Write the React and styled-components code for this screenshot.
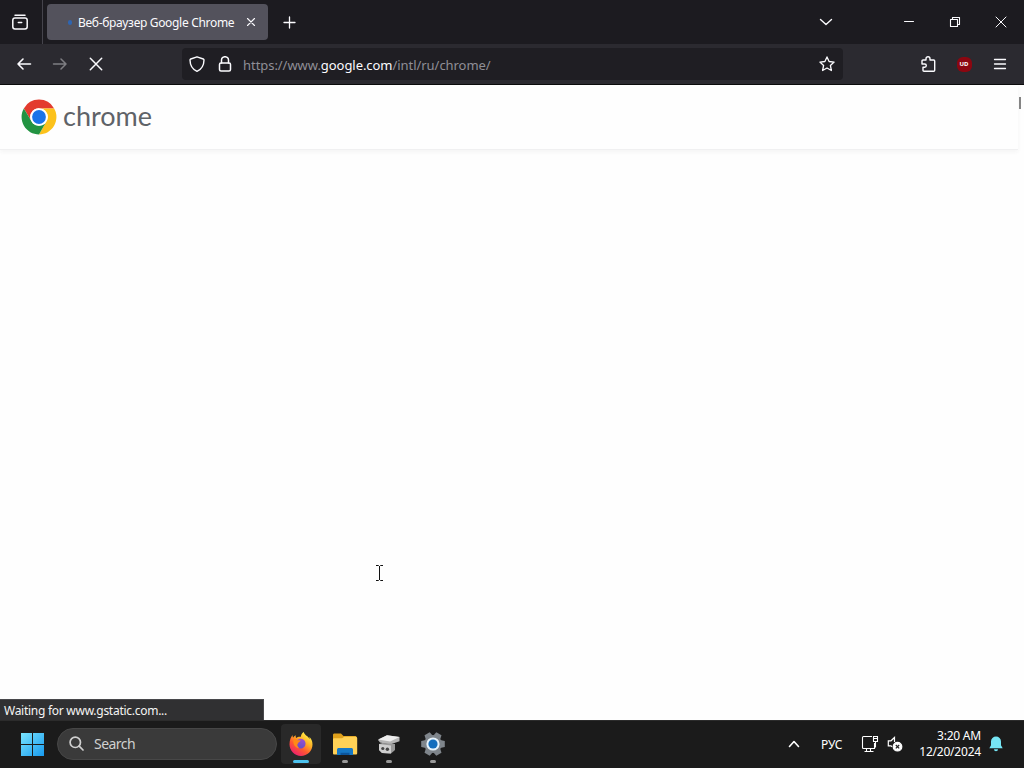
import React from 'react';
import styled, { createGlobalStyle } from 'styled-components';

const GlobalStyle = createGlobalStyle`
  * {
    box-sizing: border-box;
  }

  body {
    margin: 0;
    overflow: hidden;
    font-family: 'Noto Sans', 'Open Sans', sans-serif;
  }

  svg {
    display: block;
    flex: none;
  }
`;

const Desktop = styled.div`
  position: relative;
  display: flex;
  flex-direction: column;
  width: 1024px;
  height: 768px;
  background: #fefefe;
`;

const TabStrip = styled.div`
  display: flex;
  align-items: center;
  height: 44px;
  background: #1c1b20;
  color: #fbfbfe;
`;

const IconCell = styled.div`
  display: flex;
  flex: none;
  align-items: center;
  justify-content: center;
  width: ${(props) => props.$width}px;
  height: 100%;
  opacity: ${(props) => (props.$dim ? 0.4 : 1)};
`;

const RecentCell = styled(IconCell)`
  margin-right: 4px;
  padding-right: 2px;
  border-right: 1px solid #45444c;
`;

const Tab = styled.div`
  display: flex;
  align-items: center;
  width: 221px;
  height: 36px;
  padding: 0 12px 0 21px;
  border-radius: 4px;
  background: #53525c;
`;

const LoadingDot = styled.div`
  width: 4px;
  height: 5px;
  margin-right: 6px;
  border-radius: 2px;
  background: #2f65b0;
`;

const TabTitle = styled.div`
  flex: 1;
  padding-top: 1px;
  font-size: 12px;
  letter-spacing: ${(props) => props.$spacing}px;
  white-space: nowrap;
`;

const Spacer = styled.div`
  flex: 1;
`;

const Toolbar = styled.div`
  display: flex;
  align-items: center;
  height: 41px;
  padding: 0 6px;
  border-bottom: 1px solid #0c0c0d;
  background: #2b2a30;
  color: #fbfbfe;
`;

const UrlBar = styled.div`
  display: flex;
  align-items: center;
  width: 661px;
  height: 32px;
  margin-left: 68px;
  padding: 0 2px 0 1px;
  border-radius: 4px;
  background: #1f1e23;
`;

const Url = styled.div`
  margin-left: 4px;
  padding-top: 2px;
  color: #8f8e96;
  font-size: 13px;
  letter-spacing: ${(props) => props.$spacing}px;
  white-space: nowrap;
`;

const Domain = styled.span`
  color: #fbfbfe;
`;

const Blocker = styled.div`
  width: 15px;
  height: 15px;
  border-radius: 6px;
  background: #8c0610;
  color: #fff;
  font-size: 6px;
  font-weight: 700;
  line-height: 14px;
  text-align: center;
`;

const Page = styled.main`
  position: relative;
  flex: 1;
`;

const PageHeader = styled.header`
  display: flex;
  align-items: center;
  width: 1018px;
  height: 65px;
  padding-left: 21px;
  border-bottom: 1px solid #f0f0f1;
  box-shadow: 0 2px 4px rgba(60, 64, 67, 0.05);
`;

const Wordmark = styled.div`
  margin: -2px 0 0 6px;
  color: #5f6368;
  font-family: Lato, sans-serif;
  font-size: 27px;
  line-height: 34px;
`;

const ScrollMark = styled.div`
  position: absolute;
  top: 12px;
  right: 3px;
  width: 2px;
  height: 12px;
  background: #858585;
`;

const StatusText = styled.div`
  position: absolute;
  bottom: 0;
  left: 0;
  width: 264px;
  height: 21px;
  padding-left: 4px;
  border: 1px solid #48484b;
  border-width: 1px 1px 0 0;
  background: #303032;
  color: #f4f4f4;
  font-size: 12px;
  line-height: 22px;
  letter-spacing: ${(props) => props.$spacing}px;
`;

const TextCursor = styled.svg`
  position: absolute;
  top: 565px;
  left: 375px;
`;

const Taskbar = styled.footer`
  display: flex;
  align-items: center;
  height: 48px;
  padding: 0 0 1px 21px;
  border-top: 1px solid #2c2c2c;
  background: #1b1b1b;
  color: #fff;
`;

const SearchBox = styled.div`
  display: flex;
  align-items: center;
  width: 220px;
  height: 32px;
  margin: 0 4px 0 12px;
  padding: 0 0 1px 11px;
  border: 1px solid #474747;
  border-radius: 16px;
  background: #3a3a3a;
  color: #d0d0d0;
  font-size: 14px;
  line-height: 18px;
`;

const SearchLabel = styled.span`
  margin-left: 10px;
  letter-spacing: ${(props) => props.$spacing}px;
`;

const AppButton = styled.div`
  display: flex;
  flex-direction: column;
  align-items: center;
  justify-content: space-between;
  width: 40px;
  height: 40px;
  margin-right: 4px;
  padding: 8px 0 1px;
  border-radius: 4px;
  background: ${(props) => (props.$active ? '#292929' : 'transparent')};
`;

const Running = styled.div`
  width: ${(props) => (props.$active ? 16 : 6)}px;
  height: 3px;
  border-radius: 2px;
  background: ${(props) => (props.$active ? '#4cc2ee' : '#999')};
`;

const Language = styled.div`
  width: 24px;
  margin: 0 16px 0 21px;
  font-size: 12px;
  letter-spacing: ${(props) => props.$spacing}px;
`;

const Speaker = styled.div`
  margin-left: 8px;
`;

const Clock = styled.div`
  width: 66px;
  margin: 0 8px 0 12px;
  font-size: 12px;
  line-height: 16px;
  letter-spacing: ${(props) => props.$spacing}px;
  text-align: right;
  white-space: nowrap;
`;

const Bell = styled.div`
  width: 35px;
`;

const Line = ({ size = 16, width = 1.3, children }) => (
  <svg
    width={size}
    height={size}
    viewBox={`0 0 ${size} ${size}`}
    fill="none"
    stroke="currentColor"
    strokeWidth={width}
    strokeLinecap="round"
    strokeLinejoin="round"
  >
    {children}
  </svg>
);

const ChromeLogo = () => (
  <svg width="36" height="36" viewBox="-24 -24 48 48">
    <path d="M-20.2-11.5A23.3 23.3 0 0 1 20.2-11.5H0A11.5 11.5 0 0 0-10 5.8z" fill="#e33b2e" />
    <path d="M20.2-11.5A23.3 23.3 0 0 1 0 23.3L10 5.8A11.5 11.5 0 0 0 0-11.5z" fill="#fcc21b" />
    <path d="M0 23.3A23.3 23.3 0 0 1-20.2-11.5L-10 5.8A11.5 11.5 0 0 0 10 5.8z" fill="#229342" />
    <circle r="11.8" fill="#fff" />
    <circle r="9.2" fill="#1a73e8" />
  </svg>
);

const WindowsLogo = () => (
  <svg width="24" height="24" viewBox="0 0 24 24">
    <defs>
      <linearGradient id="win" x1="0" y1="0" x2="24" y2="24" gradientUnits="userSpaceOnUse">
        <stop offset="0" stopColor="#7be6ff" />
        <stop offset="1" stopColor="#1598ee" />
      </linearGradient>
    </defs>
    <path d="M0 1h11v11H0zM12 1h11v11H12zM0 13h11v11H0zM12 13h11v11H12z" fill="url(#win)" />
  </svg>
);

const FirefoxIcon = () => (
  <svg width="24" height="24" viewBox="0 0 24 24">
    <defs>
      <linearGradient id="fire" x1="19" y1="2" x2="5" y2="22" gradientUnits="userSpaceOnUse">
        <stop offset="0" stopColor="#fff04a" />
        <stop offset=".35" stopColor="#ffae25" />
        <stop offset=".65" stopColor="#ff5830" />
        <stop offset="1" stopColor="#ed216d" />
      </linearGradient>
      <linearGradient id="globe" x1="13" y1="6" x2="10" y2="18" gradientUnits="userSpaceOnUse">
        <stop offset="0" stopColor="#a04fd0" />
        <stop offset="1" stopColor="#5a4fc4" />
      </linearGradient>
    </defs>
    <path
      d="M14.7 0c-2 1.4-2.7 3.1-2.8 4.8-2.1-.2-3.6.4-4.8 1.2-.5-.8-.5-1.7-.3-2.8-1.2.5-2 1.4-2.6 2.3-.7-.1-.6-1.8-.2-2.5C1.8 4.7.5 8.4.5 12.3.5 18.7 5.7 24 12 24s11.5-5.1 11.5-11.5c0-3.4-1.3-6.2-3.3-7.8.4 1 .5 1.8.5 2.5C19.2 3.8 15.6 3.5 14.7 0z"
      fill="url(#fire)"
    />
    <path d="M8 8.5c1.6-2 5-2.2 7-.4 2.7 2.5 1.7 7-1.5 8.1-2.9.9-5.9-.8-6.2-3.5-.1-1.7.2-3.1.7-4.2z" fill="url(#globe)" />
    <path d="M4.6 7.1c2.1-.7 3.3.4 4.3 1.2h2.6c0 1.3-1.1 1.5-2 2.2-.4.8-1 1.4-1.2 2.5.2 1.4.8 2 1.700 2.800-.8.6-1.700.5-3.200-.7C4.600 13.400 3.800 10.100 4.600 7.100z" fill="#ff8a16" />
  </svg>
);

const FolderIcon = () => (
  <svg width="26" height="24" viewBox="0 0 26 24">
    <path d="M1 20V3c0-1 .6-1.5 1.5-1.5H9L11.5 4H23c1 0 1.5.5 1.5 1.5V9z" fill="#dfa01b" />
    <path d="M1 7.5c0-.8.5-1.2 1.3-1.2h7.900l2-1.600h11.500c.9 0 1.500.6 1.500 1.500v15c0 .8-.6 1.300-1.400 1.300H2.300C1.500 22.500 1 22 1 21.200z" fill="#ffd156" />
    <path d="M5 23v-5.500C5 16.600 5.800 16 6.700 16h12.600c1 0 1.700.6 1.700 1.500V23z" fill="#1678c5" />
    <path d="M8.500 23v-2.200h9V23z" fill="#0c559b" />
  </svg>
);

const InstallerIcon = () => (
  <svg width="24" height="24" viewBox="0 0 24 24">
    <path d="M1 8 10 3.200 22.500 5v4.200L13 12.500 3 10.500z" fill="#b5b5b5" />
    <path d="M1 7.500 10 3.200 22.500 5l-9.300 4.500z" fill="#ededed" />
    <path d="m2 12 3.500-1 12.500 1v6l-4 3.500-9-.5-3-3z" fill="#9a9a9a" />
    <path d="m2 12 12 1.500v8l-9-.5-3-3z" fill="#cfcfcf" />
    <circle cx="5.800" cy="16.500" r="1.600" fill="#464646" />
    <circle cx="10.400" cy="17.200" r="1.700" fill="#464646" />
  </svg>
);

const SettingsIcon = () => (
  <svg width="24" height="24" viewBox="-12 -12 24 24">
    {[0, 60, 120, 180, 240, 300].map((angle) => (
      <path key={angle} d="m-4-7 1-4.800h6L4-7z" fill="#7f858b" transform={`rotate(${angle + 30})`} />
    ))}
    <circle r="9" fill="#7f858b" />
    <circle r="6.600" fill="#e6f3fb" />
    <circle r="4.600" fill="#146ebd" />
  </svg>
);

const apps = [
  { name: 'firefox', Icon: FirefoxIcon, active: true },
  { name: 'explorer', Icon: FolderIcon },
  { name: 'installer', Icon: InstallerIcon },
  { name: 'settings', Icon: SettingsIcon },
];

const BrowserTabs = () => (
  <TabStrip>
    <RecentCell $width={43}>
      <Line width={1.5}>
        <path d="M3 1.2h10" />
        <rect x=".8" y="4" width="14.4" height="11" rx="2.2" />
        <path d="M6.3 8.5h3.4" />
      </Line>
    </RecentCell>
    <Tab>
      <LoadingDot />
      <TabTitle $spacing={-0.31}>Веб-браузер Google Chrome</TabTitle>
      <Line size={10} width={1.1}>
        <path d="m1.5 1.5 7 7m0-7-7 7" />
      </Line>
    </Tab>
    <IconCell $width={43}>
      <Line size={13}>
        <path d="M6.5 1v11M1 6.5h11" />
      </Line>
    </IconCell>
    <Spacer />
    <IconCell $width={40}>
      <Line size={14} width={1.4}>
        <path d="m1.5 4.5 5.5 5 5.5-5" />
      </Line>
    </IconCell>
    <IconCell $width={40} />
    <IconCell $width={46}>
      <Line size={10} width={1}>
        <path d="M.5 4.5h9" />
      </Line>
    </IconCell>
    <IconCell $width={46}>
      <Line size={12} width={1.1}>
        <path d="M1.5 3.5h7v7h-7zM3.5 3.5v-2h7v7h-2" />
      </Line>
    </IconCell>
    <IconCell $width={46}>
      <Line size={12} width={1}>
        <path d="m1 1 10 10M11 1 1 11" />
      </Line>
    </IconCell>
  </TabStrip>
);

const NavigationBar = () => (
  <Toolbar>
    <IconCell $width={36}>
      <Line width={1.6}>
        <path d="M14.5 8H2M7 3 2 8l5 5" />
      </Line>
    </IconCell>
    <IconCell $width={36} $dim>
      <Line width={1.5}>
        <path d="M1.500 8H14M9 3l5 5-5 5" />
      </Line>
    </IconCell>
    <IconCell $width={36}>
      <Line width={1.5}>
        <path d="m2.3 2.3 11.4 11.4m0-11.4L2.3 13.7" />
      </Line>
    </IconCell>
    <UrlBar>
      <IconCell $width={28}>
        <Line width={1.4}>
          <path d="M8 .8 14.3 3c.5.2.7.5.7 1-.1 5.5-2.6 9.4-7 11.3C3.6 13.400 1.100 9.500 1 4c0-.5.2-.8.7-1z" />
        </Line>
      </IconCell>
      <IconCell $width={28}>
        <Line width={1.5}>
          <rect x="2.5" y="7" width="11" height="8" rx="1.5" />
          <path d="M4.5 7V4a3.5 3.3 0 0 1 7 0v3" />
        </Line>
      </IconCell>
      <Url $spacing={-0.05}>
        https://www.<Domain>google.com</Domain>/intl/ru/chrome/
      </Url>
      <Spacer />
      <IconCell $width={28}>
        <Line width={1.3}>
          <path d="m8 .9 2.1 4.600 5 .6-3.700 3.400 1 5L8 12l-4.400 2.500 1-5L.9 6.100l5-.6z" />
        </Line>
      </IconCell>
    </UrlBar>
    <Spacer />
    <IconCell $width={36}>
      <Line width={1.4}>
        <path d="M6 4V2.700a2 2 0 0 1 4 0V4h3.700c.6 0 1 .4 1 1v9.200c0 .6-.4 1-1 1H4c-.6 0-1-.4-1-1v-3h1.700a1.600 1.600 0 0 0 0-3.200H2V5c0-.6.4-1 1-1z" />
      </Line>
    </IconCell>
    <IconCell $width={36}>
      <Blocker>UD</Blocker>
    </IconCell>
    <IconCell $width={36}>
      <Line width={1.3}>
        <path d="M2.500 3.500h11M2.500 8h11M2.500 12.500h11" />
      </Line>
    </IconCell>
  </Toolbar>
);

const SystemTray = () => (
  <>
    <Line size={12} width={1.6}>
      <path d="m1.5 8.5 4.5-5 4.5 5" />
    </Line>
    <Language $spacing={-0.1}>РУС</Language>
    <svg width="18" height="18" viewBox="0 0 18 18" fill="none" stroke="currentColor" strokeWidth="1.1">
      <path d="M11 1.5H2.5q-1 0-1 1v10q0 1 1 1h11V8M5.500 13.500v3m4-3v3M3.500 16.500h9" />
      <path d="M12.500 1.500h4v5h-4zM12.500 3.500h4M14.500 6.500v6" />
    </svg>
    <Speaker>
      <svg width="16" height="16" viewBox="0 0 16 16" fill="none" stroke="currentColor" strokeWidth="1.2">
        <path d="M7.500 6V1.500L4 4.800H1.300v5H4l1 .9" />
        <circle cx="10.500" cy="10.700" r="4.300" fill="#fff" />
        <path d="m8.800 9 3.400 3.400m0-3.400-3.400 3.400" stroke="#222" />
      </svg>
    </Speaker>
    <Clock $spacing={-0.21}>
      <div>3:20 AM</div>
      <div>12/20/2024</div>
    </Clock>
    <Bell>
      <svg width="14" height="16" viewBox="0 0 14 16" fill="#76e5f4">
        <path d="M7 .5a5 5 0 0 1 5 5v3.700l1.700 3.100H.3L2 9.200V5.500a5 5 0 0 1 5-5zM5 13.200h4a2 2 0 0 1-4 0z" />
      </svg>
    </Bell>
  </>
);

const App = () => {
  return (
    <Desktop>
      <GlobalStyle />
      <BrowserTabs />
      <NavigationBar />
      <Page>
        <PageHeader>
          <ChromeLogo />
          <Wordmark>chrome</Wordmark>
        </PageHeader>
        <ScrollMark />
        <StatusText $spacing={-0.27}>Waiting for www.gstatic.com...</StatusText>
      </Page>
      <Taskbar>
        <WindowsLogo />
        <SearchBox>
          <Line size={15} width={1.7}>
            <circle cx="6.3" cy="6.3" r="5.2" />
            <path d="m10.2 10.2 3.8 3.8" />
          </Line>
          <SearchLabel $spacing={-0.55}>Search</SearchLabel>
        </SearchBox>
        {apps.map(({ name, Icon, active }) => (
          <AppButton key={name} $active={active}>
            <Icon />
            <Running $active={active} />
          </AppButton>
        ))}
        <Spacer />
        <SystemTray />
      </Taskbar>
      <TextCursor width="9" height="16" viewBox="0 0 9 16" fill="none" stroke="#111">
        <path d="M1 .5h2.5l1 1 1-1H8M4.5 1v14M1 15.5h2.5l1-1 1 1H8" />
      </TextCursor>
    </Desktop>
  );
};

export default App;
